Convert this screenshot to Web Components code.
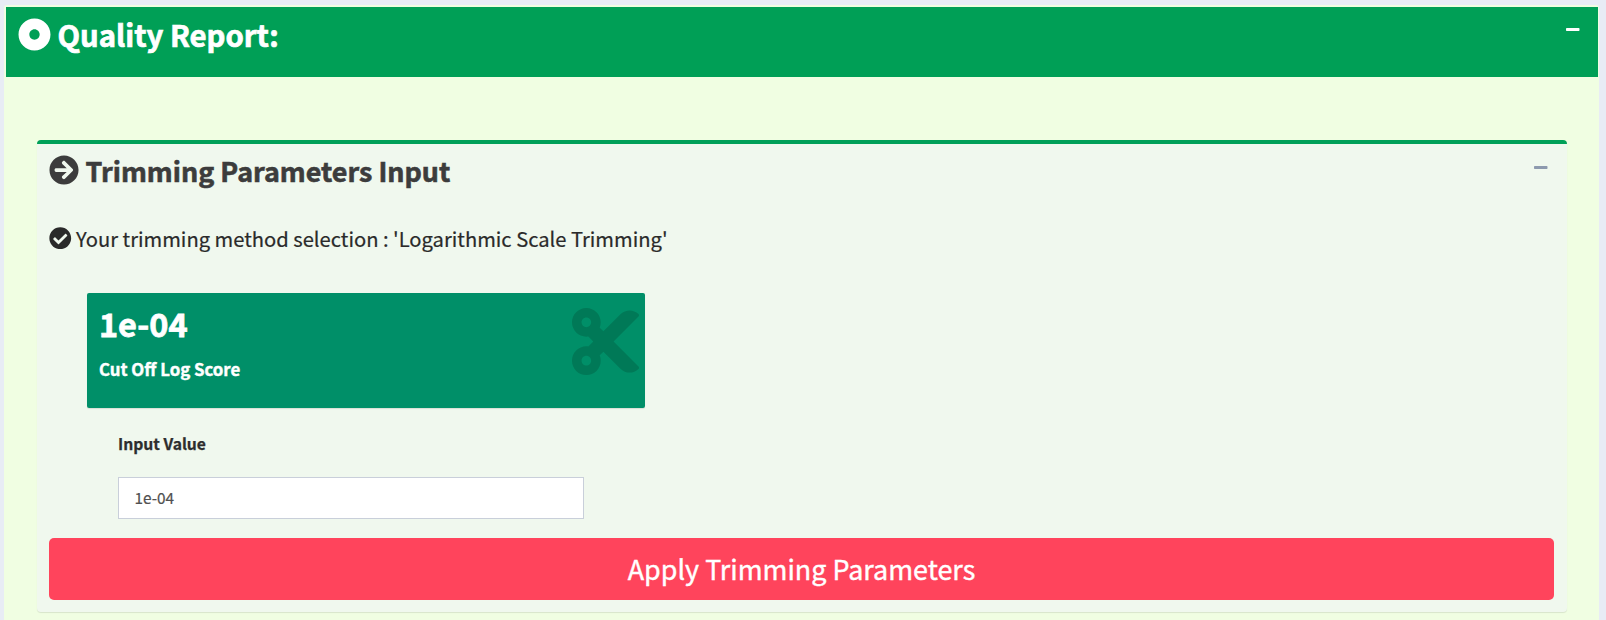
<!DOCTYPE html>
<html lang="en"><head><meta charset="utf-8"><title>Quality Report</title>
<style>
html,body{margin:0;height:100%}
body{display:flex;flex-direction:column;background:#e8ecf5;overflow:hidden;font-family:"Noto Sans CJK SC","Noto Sans",sans-serif;color:#2d2d2d}
</style></head><body>
<report-box heading="Quality Report:">
  <param-box heading="Trimming Parameters Input">
    <method-line>Your trimming method selection : 'Logarithmic Scale Trimming'</method-line>
    <score-tile value="1e-04">Cut Off Log Score</score-tile>
    <value-field label="Input Value" value="1e-04"></value-field>
    <apply-button>Apply Trimming Parameters</apply-button>
  </param-box>
</report-box>
<script>
const ICONS={
dot:['0 0 512 512','M256 8C119 8 8 119 8 256s111 248 248 248 248-111 248-248S393 8 256 8zm80 248c0 44.1-35.9 80-80 80s-80-35.9-80-80 35.9-80 80-80 80 35.9 80 80z'],
arrow:['0 0 512 512','M256 8c137 0 248 111 248 248S393 504 256 504 8 393 8 256 119 8 256 8zm-28.9 143.6l75.5 72.4H120c-13.3 0-24 10.7-24 24v16c0 13.3 10.7 24 24 24h182.6l-75.5 72.4c-9.7 9.3-9.9 24.8-.4 34.3l11 10.9c9.4 9.4 24.6 9.4 33.9 0L404.3 273c9.4-9.4 9.4-24.6 0-33.9L271.6 106.3c-9.4-9.4-24.6-9.4-33.9 0l-11 10.9c-9.5 9.6-9.3 25.1.4 34.4z'],
check:['0 0 512 512','M504 256c0 136.967-111.033 248-248 248S8 392.967 8 256 119.033 8 256 8s248 111.033 248 248zM227.314 387.314l184-184c6.248-6.248 6.248-16.379 0-22.627l-22.627-22.627c-6.248-6.249-16.379-6.249-22.628 0L216 308.118l-70.059-70.059c-6.248-6.248-16.379-6.248-22.628 0l-22.627 22.627c-6.248 6.248-6.248 16.379 0 22.627l104 104c6.249 6.249 16.379 6.249 22.628.001z'],
cut:['0 32 448 448','M278.06 256L444.48 89.57c4.69-4.69 4.69-12.29 0-16.97-32.8-32.8-85.99-32.8-118.79 0L210.18 188.12l-24.86-24.86c4.31-10.92 6.68-22.81 6.68-35.26 0-53.02-42.98-96-96-96S0 74.98 0 128s42.98 96 96 96c4.54 0 8.99-.32 13.36-.93L142.29 256l-32.93 32.93c-4.37-.61-8.83-.93-13.36-.93-53.02 0-96 42.98-96 96s42.98 96 96 96 96-42.98 96-96c0-12.45-2.37-24.34-6.68-35.26l24.86-24.86L325.69 439.4c32.8 32.8 85.99 32.8 118.79 0 4.69-4.68 4.69-12.28 0-16.97L278.06 256zM96 160c-17.64 0-32-14.36-32-32s14.36-32 32-32 32 14.36 32 32-14.36 32-32 32zm0 256c-17.64 0-32-14.36-32-32s14.36-32 32-32 32 14.36 32 32-14.36 32-32 32z'],
minus:['0 0 14 3','M.7 0H12.8Q13.5 0 13.5 .7V2.3Q13.5 3 12.8 3H.7Q0 3 0 2.3V.7Q0 0 .7 0Z']};
const define=(name,html)=>customElements.define(name,class extends HTMLElement{
  connectedCallback(){
    if(this.shadowRoot)return;
    this.attachShadow({mode:'open'}).innerHTML=html(this);
  }});
define('ui-icon',el=>{const [box,d]=ICONS[el.getAttribute('name')];return `
<style>:host{display:block;flex:none}svg{display:block;width:100%;height:100%}</style>
<svg viewBox="${box}" fill="currentColor"><path d="${d}"/></svg>`});
define('report-box',el=>`
<style>
:host{display:block;flex:1;min-height:0;box-sizing:border-box;margin:5px 7px 0 4px;padding:2px 1px 0 2px;background:#f0fee2;border-radius:3px 3px 0 0}
header{display:flex;box-sizing:border-box;height:70px;background:#009f56;color:#fff;padding:12px 18px 0 12px}
.dot{width:33px;height:33px;margin-top:-1px}
h2{margin:-2px auto 0 6.5px;font-size:29.3px;line-height:34px;font-weight:700;white-space:nowrap;-webkit-text-stroke:.7px}
.min{width:14px;height:3px;margin-top:9px}
main{padding:63px 31px 0}
</style>
<header><ui-icon class="dot" name="dot"></ui-icon><h2>${el.getAttribute('heading')}</h2><ui-icon class="min" name="minus"></ui-icon></header>
<main><slot></slot></main>`);
define('param-box',el=>`
<style>
:host{display:block;box-sizing:border-box;height:472px;border-top:4px solid #00a058;border-radius:4px;background:#f0f8ee;padding:11px 13px 0 12px;box-shadow:0 1px 1px rgba(0,0,0,.1)}
header{display:flex;height:32px;color:#3c3c3c}
.arrow{width:30px;height:30px}
h3{margin:0 auto 0 6.5px;font-size:26.9px;line-height:32px;font-weight:700;white-space:nowrap;-webkit-text-stroke:.6px}
.min{width:14px;height:3px;margin:11px 6px 0 0;color:#8d9aae}
</style>
<header><ui-icon class="arrow" name="arrow"></ui-icon><h3>${el.getAttribute('heading')}</h3><ui-icon class="min" name="minus"></ui-icon></header>
<slot></slot>`);
define('method-line',()=>`
<style>:host{display:flex;align-items:center;height:26px;margin-top:38px;font-size:20.17px;line-height:26px;color:#2a2a2a;white-space:nowrap;-webkit-text-stroke:.2px}
ui-icon{width:22.5px;height:22.5px;margin-right:4.5px}span{padding-top:2px}</style>
<ui-icon name="check"></ui-icon><span><slot></slot></span>`);
define('score-tile',el=>`
<style>:host{display:flex;justify-content:space-between;box-sizing:border-box;width:558px;height:115px;margin:42px 0 0 38px;padding:15px 6px 0 12px;background:#008f68;color:#fff;border-radius:2px;box-shadow:0 1px 1px rgba(0,0,0,.1);font-weight:700;white-space:nowrap}
.v{font-size:32.4px;line-height:34px;margin-top:-2px;-webkit-text-stroke:.8px}.t{font-size:16.8px;line-height:22px;margin-top:18px;-webkit-text-stroke:.4px}
ui-icon{width:67px;height:67px;color:#007957}</style>
<div><div class="v">${el.getAttribute('value')}</div><div class="t"><slot></slot></div></div><ui-icon name="cut"></ui-icon>`);
define('value-field',el=>`
<style>:host{display:block;width:466px;margin:25px 0 0 69px}
label{display:block;font-size:15.7px;line-height:22px;font-weight:700;color:#2d2d2d;-webkit-text-stroke:.25px}
.box{box-sizing:border-box;height:42px;margin-top:22px;padding:0 15.5px;border:1px solid #c9cfda;background:#fff;font-size:15.4px;line-height:38px;color:#505050;-webkit-text-stroke:.2px}</style>
<label>${el.getAttribute('label')}</label><div class="box">${el.getAttribute('value')}</div>`);
define('apply-button',()=>`
<style>:host{display:block;height:62px;margin-top:19px}
button{display:block;width:100%;height:62px;margin:0;padding:0;border:0;border-radius:5px;background:#ff445c;color:#fff;font:26.9px/62px "Noto Sans CJK SC","Noto Sans",sans-serif;-webkit-text-stroke:.4px}</style>
<button type="button"><slot></slot></button>`);
</script></body></html>
